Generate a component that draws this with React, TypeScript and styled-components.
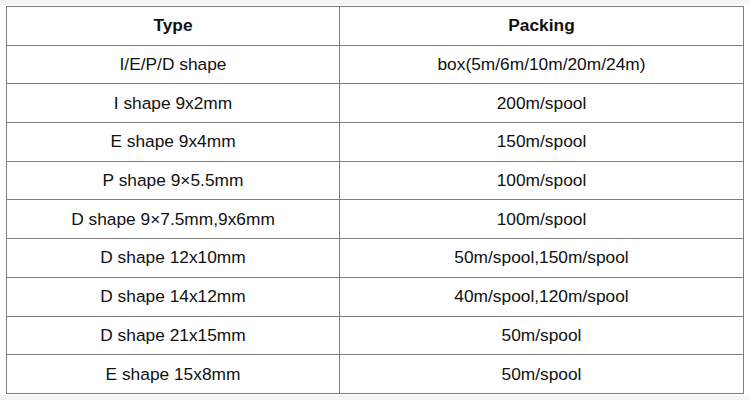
import React from 'react';
import styled, { createGlobalStyle } from 'styled-components';

interface Row {
    type: string;
    packing: string;
}

const rows: Row[] = [
    { type: 'I/E/P/D shape', packing: 'box(5m/6m/10m/20m/24m)' },
    { type: 'I shape 9x2mm', packing: '200m/spool' },
    { type: 'E shape 9x4mm', packing: '150m/spool' },
    { type: 'P shape 9×5.5mm', packing: '100m/spool' },
    { type: 'D shape 9×7.5mm,9x6mm', packing: '100m/spool' },
    { type: 'D shape 12x10mm', packing: '50m/spool,150m/spool' },
    { type: 'D shape 14x12mm', packing: '40m/spool,120m/spool' },
    { type: 'D shape 21x15mm', packing: '50m/spool' },
    { type: 'E shape 15x8mm', packing: '50m/spool' },
];

const GlobalStyle = createGlobalStyle`
    html, body {
        margin: 0;
        padding: 0;
        background: #f5f5f5;
    }
`;

const Page = styled.div`
    padding-top: 5px;
    width: 750px;
    height: 400px;
    box-sizing: border-box;
`;

const Sheet = styled.div`
    background: #ffffff;
    height: 390px;
    padding: 1px 0 0 6px;
    box-sizing: border-box;
`;

const Table = styled.table`
    border-collapse: collapse;
    table-layout: fixed;
    width: 737px;
    height: 388px;
    font-family: "Liberation Sans", Arial, sans-serif;
    font-size: 17.33px;
    color: #111111;
`;

const Cell = styled.td<{ $head?: boolean }>`
    border: 1px solid #7f7f7f;
    text-align: center;
    vertical-align: middle;
    padding: 0;
    font-weight: ${(p) => (p.$head ? 'bold' : 'normal')};
    white-space: nowrap;
`;

const App: React.FC = () => {
    return (
        <Page>
            <GlobalStyle />
            <Sheet>
                <Table>
                    <colgroup>
                        <col style={{ width: 333 }} />
                        <col style={{ width: 404 }} />
                    </colgroup>
                    <tbody>
                        <tr>
                            <Cell $head>Type</Cell>
                            <Cell $head>Packing</Cell>
                        </tr>
                        {rows.map((r) => (
                            <tr key={r.type}>
                                <Cell>{r.type}</Cell>
                                <Cell>{r.packing}</Cell>
                            </tr>
                        ))}
                    </tbody>
                </Table>
            </Sheet>
        </Page>
    );
};

export default App;
